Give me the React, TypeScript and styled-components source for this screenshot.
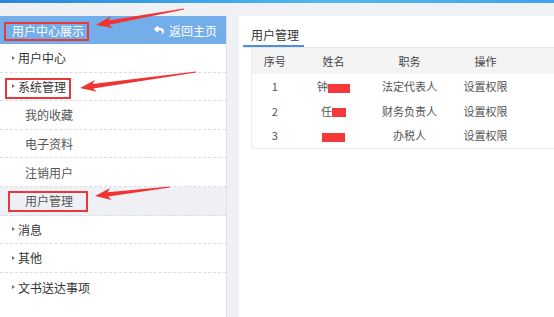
import React from 'react'
import styled, { createGlobalStyle } from 'styled-components'
import { FaReply } from 'react-icons/fa'

const GlobalStyle = createGlobalStyle`
  html, body {
    margin: 0;
    padding: 0;
    background: #f0f1f5;
    font-family: "Noto Sans CJK SC", "Noto Sans", "Liberation Sans", sans-serif;
    color: #333;
    overflow: hidden;
  }
`

const Page = styled.div`
  position: relative;
  width: 554px;
  height: 317px;
  overflow: hidden;
`

const TopBar = styled.div`
  height: 3px;
  background: linear-gradient(90deg, #2a86dc 0%, #4cbaf0 60%, #3aa6e8 100%);
`

const Main = styled.div`
  display: flex;
  padding-top: 13px;
  height: 301px;
  gap: 12px;
`

const Sidebar = styled.aside`
  width: 227px;
  flex: none;
  background: #fff;
  border-right: 1px solid #dfe1e6;
  box-sizing: border-box;
`

const SideHeader = styled.div`
  height: 28px;
  background: #74aeea;
  color: #fff;
  display: flex;
  align-items: center;
  justify-content: space-between;
  padding: 0 9px 0 12px;
  font-size: 12px;
`

const HomeLink = styled.span`
  display: flex;
  align-items: center;
  gap: 5px;
`

const Item = styled.div<{ $sub?: boolean; $active?: boolean }>`
  height: 28.6px;
  box-sizing: border-box;
  border-bottom: 1px dashed #dcdde2;
  display: flex;
  align-items: center;
  padding-left: ${(p) => (p.$sub ? '25px' : '12px')};
  gap: 3px;
  font-size: 12px;
  color: ${(p) => (p.$sub ? '#555' : '#333')};
  background: ${(p) => (p.$active ? '#eff0f5' : '#fff')};
`

const Caret = styled.span`
  width: 0;
  height: 0;
  border-top: 2.5px solid transparent;
  border-bottom: 2.5px solid transparent;
  border-left: 3px solid #777;
`

const Content = styled.section`
  flex: 1;
  background: #fff;
  padding: 0 0 0 4px;
`

const TabBar = styled.div`
  height: 31px;
  border-bottom: 1px solid #e6e7eb;
  display: flex;
  align-items: flex-end;
`

const Tab = styled.div`
  width: 61px;
  height: 29px;
  box-sizing: border-box;
  border-bottom: 2px solid #4a8ee8;
  font-size: 12px;
  color: #333;
  padding: 7px 0 0 8px;
  line-height: 20px;
`

const Table = styled.table`
  margin-left: 8px;
  border-collapse: collapse;
  table-layout: fixed;
  width: 340px;
  font-size: 11px;
  color: #555;
  border-left: 1px solid #ececec;
  border-bottom: 1px solid #ececec;

  th {
    background: #f4f4f5;
    font-weight: normal;
    color: #444;
    height: 26px;
    padding: 0;
    text-align: center;
  }
  td {
    height: 24.5px;
    padding: 0;
    text-align: center;
  }
`

const Redact = styled.span<{ $w: number }>`
  display: inline-block;
  width: ${(p) => p.$w}px;
  height: 9px;
  background: #f53838;
  vertical-align: middle;
`

const Mark = styled.div`
  position: absolute;
  border: 2px solid #e8383a;
  box-sizing: border-box;
  pointer-events: none;
`

const Overlay = styled.svg`
  position: absolute;
  left: 0;
  top: 0;
  pointer-events: none;
`

const rows = [
  { no: 1, first: '钟', w: 22, role: '法定代表人' },
  { no: 2, first: '任', w: 14, role: '财务负责人' },
  { no: 3, first: '', w: 23, role: '办税人' },
]

function arrow(sx: number, sy: number, tx: number, ty: number) {
  const dx = tx - sx
  const dy = ty - sy
  const len = Math.hypot(dx, dy)
  const ux = dx / len
  const uy = dy / len
  const nx = -uy
  const ny = ux
  const bx = tx - ux * 13
  const by = ty - uy * 13
  const wx = tx - ux * 16
  const wy = ty - uy * 16
  const p = (x: number, y: number) => `${x.toFixed(1)},${y.toFixed(1)}`
  return [
    p(sx + nx * 0.4, sy + ny * 0.4),
    p(bx + nx * 2.2, by + ny * 2.2),
    p(wx + nx * 6, wy + ny * 6),
    p(tx, ty),
    p(wx - nx * 6, wy - ny * 6),
    p(bx - nx * 2.2, by - ny * 2.2),
    p(sx - nx * 0.4, sy - ny * 0.4),
  ].join(' ')
}

export default function App() {
  return (
    <Page>
      <GlobalStyle />
      <TopBar />
      <Main>
        <Sidebar>
          <SideHeader>
            <span>用户中心展示</span>
            <HomeLink>
              <FaReply size={10} />
              返回主页
            </HomeLink>
          </SideHeader>
          <Item>
            <Caret />
            用户中心
          </Item>
          <Item>
            <Caret />
            系统管理
          </Item>
          <Item $sub>我的收藏</Item>
          <Item $sub>电子资料</Item>
          <Item $sub>注销用户</Item>
          <Item $sub $active>
            用户管理
          </Item>
          <Item>
            <Caret />
            消息
          </Item>
          <Item>
            <Caret />
            其他
          </Item>
          <Item style={{ borderBottom: 'none' }}>
            <Caret />
            文书送达事项
          </Item>
        </Sidebar>
        <Content>
          <TabBar>
            <Tab>用户管理</Tab>
          </TabBar>
          <Table>
            <colgroup>
              <col style={{ width: 46 }} />
              <col style={{ width: 72 }} />
              <col style={{ width: 80 }} />
              <col style={{ width: 72 }} />
              <col />
            </colgroup>
            <thead>
              <tr>
                <th>序号</th>
                <th>姓名</th>
                <th>职务</th>
                <th>操作</th>
                <th />
              </tr>
            </thead>
            <tbody>
              {rows.map((r) => (
                <tr key={r.no}>
                  <td>{r.no}</td>
                  <td>
                    {r.first}
                    <Redact $w={r.w} />
                  </td>
                  <td>{r.role}</td>
                  <td>设置权限</td>
                  <td />
                </tr>
              ))}
            </tbody>
          </Table>
        </Content>
      </Main>

      <Mark style={{ left: 4, top: 22, width: 85, height: 19 }} />
      <Mark style={{ left: 5, top: 78, width: 66, height: 21 }} />
      <Mark style={{ left: 8, top: 191, width: 80, height: 21 }} />

      <Overlay width="554" height="317" viewBox="0 0 554 317">
        <polygon points={arrow(184, 9, 96, 25)} fill="#f03434" />
        <polygon points={arrow(196, 72, 80, 88)} fill="#f03434" />
        <polygon points={arrow(170, 187, 95, 196)} fill="#f03434" />
      </Overlay>
    </Page>
  )
}
